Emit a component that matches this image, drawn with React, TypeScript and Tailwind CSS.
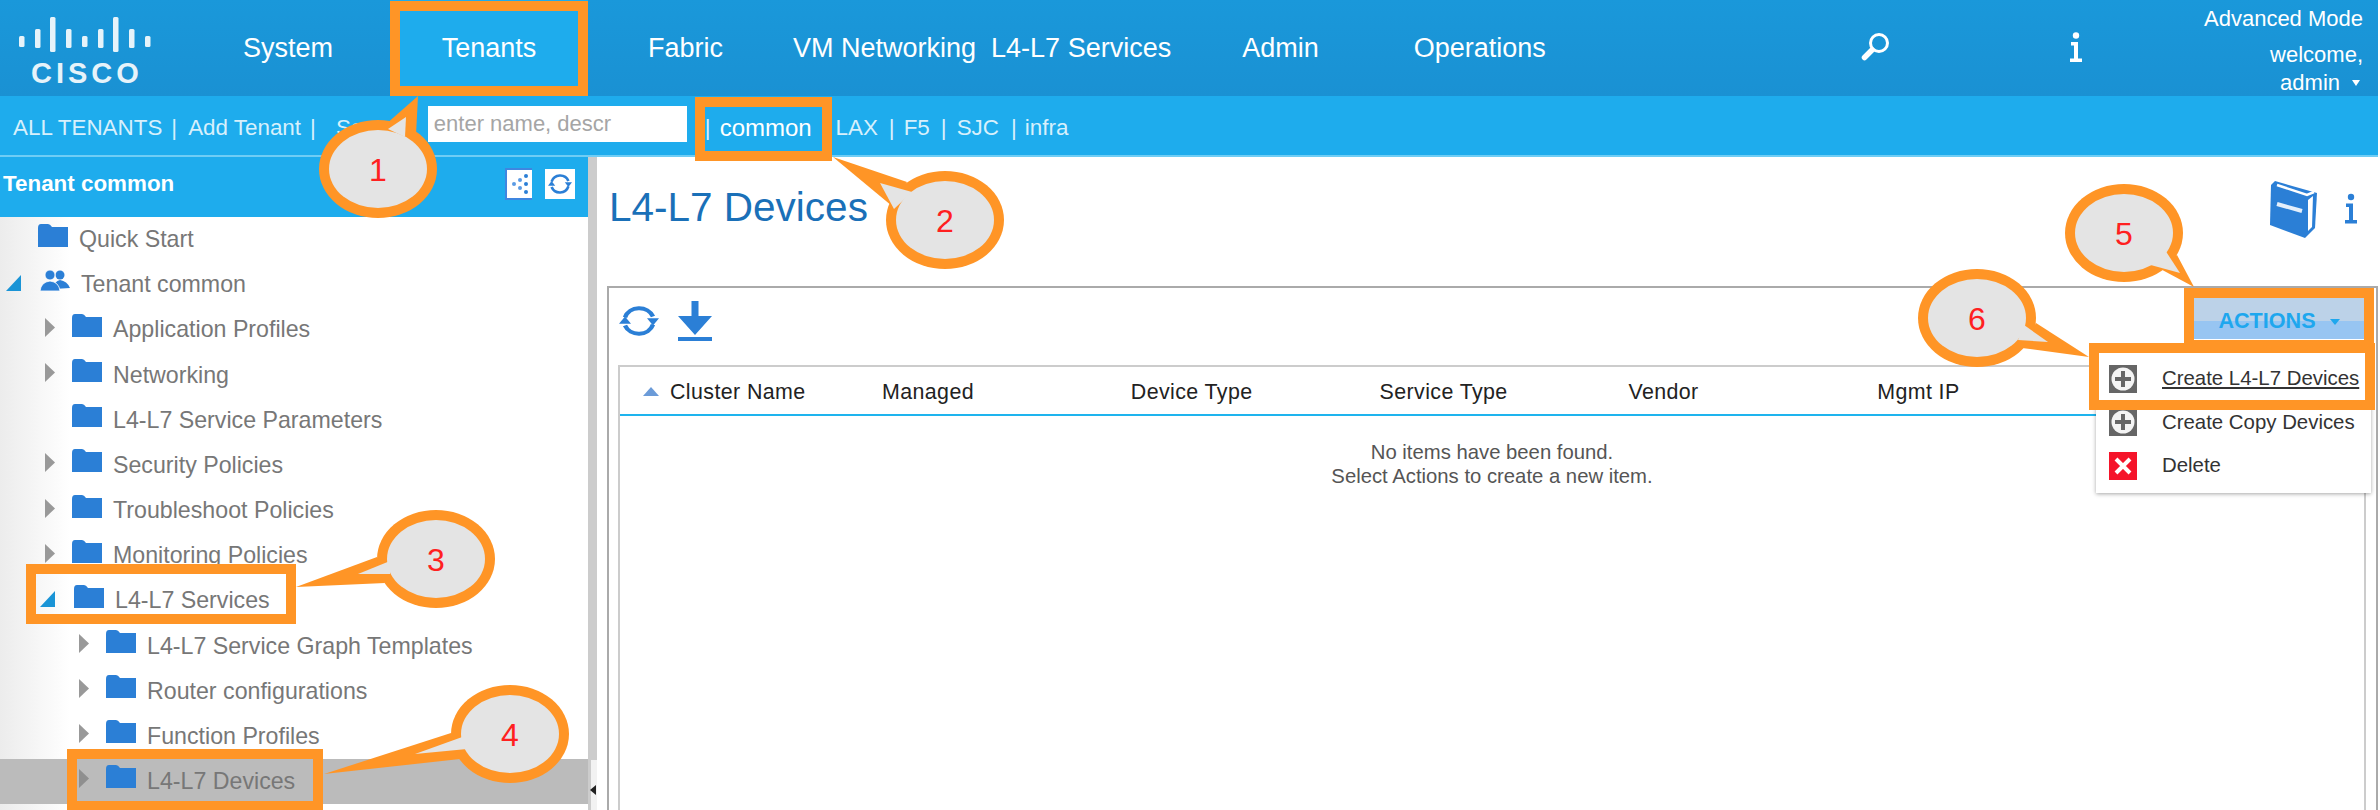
// APIC tenant page with numbered callouts
import React from 'react';
import clsx from 'clsx';

const FONT = "font-['Liberation_Sans',Arial,sans-serif]";

type TreeRow = {
    label: string;
    level: 1 | 2 | 3;
    arrow?: 'right' | 'down';
    people?: boolean;
    selected?: boolean;
};

const TREE: TreeRow[] = [
    { label: 'Quick Start', level: 1 },
    { label: 'Tenant common', level: 1, arrow: 'down', people: true },
    { label: 'Application Profiles', level: 2, arrow: 'right' },
    { label: 'Networking', level: 2, arrow: 'right' },
    { label: 'L4-L7 Service Parameters', level: 2 },
    { label: 'Security Policies', level: 2, arrow: 'right' },
    { label: 'Troubleshoot Policies', level: 2, arrow: 'right' },
    { label: 'Monitoring Policies', level: 2, arrow: 'right' },
    { label: 'L4-L7 Services', level: 2, arrow: 'down' },
    { label: 'L4-L7 Service Graph Templates', level: 3, arrow: 'right' },
    { label: 'Router configurations', level: 3, arrow: 'right' },
    { label: 'Function Profiles', level: 3, arrow: 'right' },
    { label: 'L4-L7 Devices', level: 3, arrow: 'right', selected: true },
];

const COLUMNS = ['Managed', 'Device Type', 'Service Type', 'Vendor', 'Mgmt IP'];

const Folder = () => (
    <svg width="30" height="23" viewBox="0 0 30 23" className="mb-[9px] shrink-0">
        <path d="M0 4Q0 0 3 0H10Q12 0 14 3H30V23H0Z" fill="#2b7fd6" />
    </svg>
);

const People = () => (
    <svg width="30" height="21" viewBox="0 0 30 21" className="mb-[9px] shrink-0">
        <circle cx="20" cy="5" r="4.5" fill="#2b7fd6" />
        <path d="M14 19Q14 11 20 10Q27 11 30 18Z" fill="#2b7fd6" />
        <circle cx="10" cy="5" r="5" fill="#2b7fd6" stroke="#fff" strokeWidth="0.8" />
        <path d="M0 21Q1 12 10 11Q19 12 20 21Z" fill="#2b7fd6" stroke="#fff" strokeWidth="0.8" />
    </svg>
);

const Refresh = ({ className }: { className: string }) => (
    <svg viewBox="0 0 40 40" preserveAspectRatio="none" className={className} fill="none">
        <path d="M6 16A15 15 0 0 1 34 15" stroke="#2b7fd6" strokeWidth="4.5" />
        <path d="M34 24A15 15 0 0 1 6 25" stroke="#2b7fd6" strokeWidth="4.5" />
        <path d="M28 17H40L34 25Z" fill="#2b7fd6" />
        <path d="M0 23H12L6 15Z" fill="#2b7fd6" />
    </svg>
);

const InfoGlyph = ({ color, className }: { color: string; className: string }) => (
    <svg viewBox="0 0 12 30" className={className}>
        <circle cx="6" cy="3.5" r="3.2" fill={color} />
        <path d="M1 10H8V26.5H12V30H0V26.5H4V13.5H1Z" fill={color} />
    </svg>
);

const PlusBox = () => (
    <svg width="28" height="28" viewBox="0 0 28 28" className="shrink-0">
        <rect width="28" height="28" fill="#666" />
        <circle cx="14" cy="14" r="11.5" fill="#f4f4f4" />
        <path d="M12 6H16V12H22V16H16V22H12V16H6V12H12Z" fill="#666" />
    </svg>
);

const DeleteBox = () => (
    <svg width="28" height="28" viewBox="0 0 28 28" className="shrink-0">
        <rect width="28" height="28" fill="#f5142a" />
        <path d="M7 7L21 21M21 7L7 21" stroke="#fff" strokeWidth="4" />
    </svg>
);

const Tree = () => (
    <div className="bg-[linear-gradient(90deg,#ececec,#ffffff_70px)] h-[593px] overflow-hidden">
        {TREE.map((row) => (
            <div
                key={row.label}
                className={clsx(
                    'flex items-center h-[45.17px] text-[23.2px] text-[#777777] whitespace-nowrap',
                    row.selected && 'bg-[#bbbbbb] text-[#5f5f5f]',
                    row.level === 1 && 'pl-[11px]',
                    row.level === 2 && 'pl-[45px]',
                    row.level === 3 && 'pl-[79px]',
                )}
            >
                {row.arrow === 'down' ? (
                    <svg width="15" height="16" viewBox="0 0 15 16" className="ml-[-5px] mr-[19px] mb-[3px] shrink-0">
                        <path d="M15 0V16H0Z" fill="#1a94d6" />
                    </svg>
                ) : (
                    <div className="w-[27px] shrink-0">
                        {row.arrow === 'right' && (
                            <svg width="10" height="19" viewBox="0 0 10 19" className="mb-[5px]">
                                <path d="M0 0L10 9.5L0 19Z" fill={row.selected ? '#8f8f8f' : '#999999'} />
                            </svg>
                        )}
                    </div>
                )}
                {row.people ? <People /> : <Folder />}
                <span className="ml-[11px]">{row.label}</span>
            </div>
        ))}
    </div>
);

const Sidebar = () => (
    <aside className="w-[588px] shrink-0 h-[653px]">
        <div className="h-[60px] bg-[#1eaced] flex items-center pl-[3px] pb-[6px] text-white font-bold text-[22.4px]">
            <span>Tenant common</span>
            <div className="ml-auto mr-[13px] flex items-center gap-[13px]">
                <div className="w-[27px] h-[32px] bg-white border-y-2 border-l-2 border-[#3f86e0]">
                    <svg width="25" height="28" viewBox="0 0 25 28">
                        <circle cx="19" cy="6" r="2" fill="#2b7fd6" />
                        <circle cx="19" cy="14" r="2" fill="#2b7fd6" />
                        <circle cx="19" cy="22" r="2" fill="#2b7fd6" />
                        <circle cx="13" cy="10" r="2" fill="#5b9be4" />
                        <circle cx="13" cy="18" r="2" fill="#5b9be4" />
                        <circle cx="7" cy="14" r="2" fill="#5b9be4" />
                    </svg>
                </div>
                <div className="w-[30px] h-[30px] bg-white flex items-center justify-center">
                    <Refresh className="w-[24px] h-[24px]" />
                </div>
            </div>
        </div>
        <Tree />
    </aside>
);

const ActionsMenu = () => (
    <div className="absolute left-[1487px] top-[61px] w-[275px] h-[144px] bg-white shadow-[0_1px_4px_rgba(0,0,0,0.35)] pt-[8px] text-[20.4px] text-[#333]">
        <div className="flex items-center h-[43.5px] pl-[13px] gap-[25px]">
            <PlusBox />
            <span className="underline underline-offset-2">Create L4-L7 Devices</span>
        </div>
        <div className="flex items-center h-[43.5px] pl-[13px] gap-[25px]">
            <PlusBox />
            <span>Create Copy Devices</span>
        </div>
        <div className="flex items-center h-[43.5px] pl-[13px] gap-[25px]">
            <DeleteBox />
            <span>Delete</span>
        </div>
    </div>
);

const DevicesPanel = () => (
    <div className="relative flex-1 flex flex-col border-2 border-b-0 border-[#aaaaaa]">
        <div className="h-[77px] shrink-0 flex items-center pl-[10px] pr-[12px] pb-[12px]">
            <Refresh className="w-[40px] h-[36px]" />
            <svg width="34" height="40" viewBox="0 0 34 40" className="ml-[19px]">
                <path d="M13.5 0H20.5V15H34L17 34L0 15H13.5Z" fill="#2b7fd6" />
                <rect y="36" width="34" height="4" fill="#2b7fd6" />
            </svg>
            <button className="ml-auto mb-[4px] w-[170px] h-[41px] pt-[6px] flex items-center justify-center gap-[14px] bg-[linear-gradient(#bcd2e8_56%,#97c5f2_56%)] text-[#1ea7ee] font-bold text-[21.6px]">
                ACTIONS
                <span className="w-0 h-0 border-x-[5px] border-x-transparent border-t-[6px] border-t-[#1ea7ee]" />
            </button>
        </div>
        <div className="flex-1 ml-[9px] mr-[10px] border-2 border-b-0 border-[#cccccc]">
            <div className="h-[49px] pt-[3px] flex items-center border-b-2 border-[#1eb4ee] text-[21.4px] tracking-[0.4px] text-[#222]">
                <div className="w-[262px] shrink-0 flex items-center pl-[23px]">
                    <span className="w-0 h-0 border-x-[8px] border-x-transparent border-b-[9px] border-b-[#6b9bd8]" />
                    <span className="ml-[11px]">Cluster Name</span>
                </div>
                {COLUMNS.map((col) => (
                    <div key={col} className="w-[248.8px] shrink-0">
                        {col}
                    </div>
                ))}
            </div>
            <div className="pt-[24px] text-center text-[20.3px] leading-[24px] text-[#555]">
                <p>No items have been found.</p>
                <p>Select Actions to create a new item.</p>
            </div>
        </div>
        <ActionsMenu />
    </div>
);

const Main = () => (
    <main className="flex-1 flex flex-col pl-[10px]">
        <div className="h-[129px] shrink-0 flex items-start">
            <h1 className="mt-[27px] ml-[2px] text-[40.5px] leading-[46px] text-[#1a70b8]">L4-L7 Devices</h1>
            <div className="ml-auto mr-[21px] mt-[24px] flex items-start gap-[28px]">
                <svg width="47" height="57" viewBox="0 0 47 57">
                    <path d="M1 4L5 0L47 12L45 47L35 57L0 44Z" fill="#2b7fd6" />
                    <path d="M7 4L37 14L44 11" stroke="#ffffff" strokeWidth="2.5" fill="none" />
                    <path d="M38 19L43 15L42 46L38 50Z" fill="#ffffff" />
                    <path d="M7 23L32 30" stroke="#e4effb" strokeWidth="4" />
                </svg>
                <InfoGlyph color="#2b7fd6" className="w-[12px] h-[31px] mt-[12px]" />
            </div>
        </div>
        <DevicesPanel />
    </main>
);

const Header = () => (
    <header className="h-[96px] shrink-0 flex items-center bg-[linear-gradient(180deg,#1a98da,#1a91d3)] text-white text-[27px]">
        <div className="w-[243px] shrink-0 pl-[19px] pt-[7px] flex flex-col">
            <svg width="134" height="35" viewBox="0 0 134 35">
                {[
                    [0, 19, 11],
                    [16, 12, 19],
                    [31, 0, 35],
                    [47, 12, 19],
                    [63, 19, 11],
                    [79, 12, 19],
                    [94, 0, 35],
                    [110, 12, 19],
                    [126, 19, 11],
                ].map(([x, y, h]) => (
                    <rect key={x} x={x} y={y} width="5.5" height={h} rx="1.5" fill="#e6f3fa" />
                ))}
            </svg>
            <span className="ml-[12px] mt-[8px] font-bold text-[29px] leading-[26px] tracking-[4px] text-[#e6f3fa]">CISCO</span>
        </div>
        <span className="w-[147px] shrink-0">System</span>
        <div className="w-[198px] shrink-0 self-stretch bg-[#1eaced] flex items-center justify-center">Tenants</div>
        <span className="ml-[60px]">Fabric</span>
        <span className="ml-[70px]">VM Networking</span>
        <span className="ml-[15px]">L4-L7 Services</span>
        <span className="ml-[71px]">Admin</span>
        <span className="ml-[95px]">Operations</span>
        <svg width="29" height="29" viewBox="0 0 29 29" className="ml-[315px] mb-[3px]">
            <circle cx="18" cy="11" r="8.5" fill="none" stroke="#fff" strokeWidth="3" />
            <path d="M11 18L3.5 25.5" stroke="#fff" strokeWidth="5.5" strokeLinecap="round" />
        </svg>
        <InfoGlyph color="#ffffff" className="ml-[180px] mb-[2px] w-[12px] h-[30px]" />
        <div className="ml-auto mr-[15px] self-stretch flex flex-col items-end text-[22px] leading-[26px] whitespace-nowrap">
            <span className="mt-[6px]">Advanced Mode</span>
            <span className="mt-[10px]">welcome,</span>
            <span className="mt-[2px] flex items-center mr-[3px]">
                admin
                <span className="ml-[12px] w-0 h-0 border-x-[4px] border-x-transparent border-t-[6px] border-t-white" />
            </span>
        </div>
    </header>
);

const SubBar = () => (
    <div className="h-[61px] shrink-0 flex items-center pl-[13px] bg-[#1eaced] border-b-2 border-[#6fcdf5] text-[22.4px] text-[#d7f0fc] whitespace-nowrap">
        <span className="mt-[4px]">ALL TENANTS</span>
        <span className="ml-[9px] mt-[4px]">|</span>
        <span className="ml-[11px] mt-[4px]">Add Tenant</span>
        <span className="ml-[9px] mt-[4px]">|</span>
        <span className="ml-[20px] mt-[4px]">Search</span>
        <input
            readOnly
            placeholder="enter name, descr"
            className="ml-[21px] mb-[3px] w-[259px] h-[36px] bg-white pl-[6px] text-[22px] placeholder:text-[#a5a5a5] outline-none"
        />
        <span className="ml-[18px] mt-[4px]">|</span>
        <span className="ml-[9px] mt-[4px] text-[24px] text-white">common</span>
        <span className="ml-[10px] mt-[4px]">|</span>
        <span className="ml-[8px] mt-[4px]">LAX</span>
        <span className="ml-[11px] mt-[4px]">|</span>
        <span className="ml-[9px] mt-[4px]">F5</span>
        <span className="ml-[11px] mt-[4px]">|</span>
        <span className="ml-[10px] mt-[4px]">SJC</span>
        <span className="ml-[12px] mt-[4px]">|</span>
        <span className="ml-[8px] mt-[4px]">infra</span>
    </div>
);

const Splitter = () => (
    <div className="w-[9px] shrink-0 bg-[#cccccc] relative">
        <div className="absolute bottom-0 left-[3px] w-[6px] h-[50px] bg-[#f2f2f2]" />
        <svg width="6" height="10" viewBox="0 0 6 10" className="absolute left-[2px] bottom-[15px]">
            <path d="M6 0V10L0 5Z" fill="#222" />
        </svg>
    </div>
);

type CalloutProps = {
    cx: number;
    cy: number;
    outer: string;
    inner: string;
    label: string;
};

// Speech bubble: orange wedge and ring, grey wedge and disc on top
const Callout = ({ cx, cy, outer, inner, label }: CalloutProps) => (
    <g>
        <polygon points={outer} fill="#ff9526" />
        <ellipse cx={cx} cy={cy} rx={59} ry={49} fill="#ff9526" />
        <ellipse cx={cx} cy={cy} rx={49} ry={39} fill="#e4e4e4" />
        <polygon points={inner} fill="#e4e4e4" />
        <text x={cx} y={cy + 12} textAnchor="middle" fontSize="32" fill="#ff2020">
            {label}
        </text>
    </g>
);

const Annotations = () => (
    <svg width="2380" height="810" viewBox="0 0 2380 810" fill="none" className="absolute left-0 top-0 pointer-events-none">
        <g stroke="#ff9526" strokeWidth="10">
            <rect x="395" y="6" width="188" height="85" />
            <rect x="700" y="102" width="127" height="54" />
            <rect x="31" y="569" width="260" height="50" />
            <rect x="72" y="754" width="246" height="52" />
            <rect x="2189" y="293" width="180" height="52" />
            <rect x="2094" y="348" width="276" height="57" />
        </g>
        <Callout cx={378} cy={169} outer="418,96 385,125 416,135" inner="406,117 388,129 405,137" label="1" />
        <Callout cx={945} cy={220} outer="833,157 907,182 892,206" inner="880,183 912,192 894,209" label="2" />
        <Callout cx={436} cy={559} outer="296,587 377,557 385,583" inner="358,574 390,561 390,574" label="3" />
        <Callout cx={510} cy={734} outer="324,774 451,733 460,759" inner="415,754 465,736 467,749" label="4" />
        <Callout cx={2124} cy={233} outer="2194,287 2177,255 2153,265" inner="2180,273 2165,250 2147,264" label="5" />
        <Callout cx={1977} cy={318} outer="2089,357 2036,323 2022,348" inner="2048,342 2024,325 2018,340" label="6" />
    </svg>
);

const App: React.FC = () => {
    return (
        <div className={clsx('relative w-[2380px] h-[810px] overflow-hidden bg-white', FONT)}>
            <div className="w-[2378px] h-full flex flex-col">
                <Header />
                <SubBar />
                <div className="flex-1 flex min-h-0">
                    <Sidebar />
                    <Splitter />
                    <Main />
                </div>
            </div>
            <Annotations />
        </div>
    );
};

export default App;
